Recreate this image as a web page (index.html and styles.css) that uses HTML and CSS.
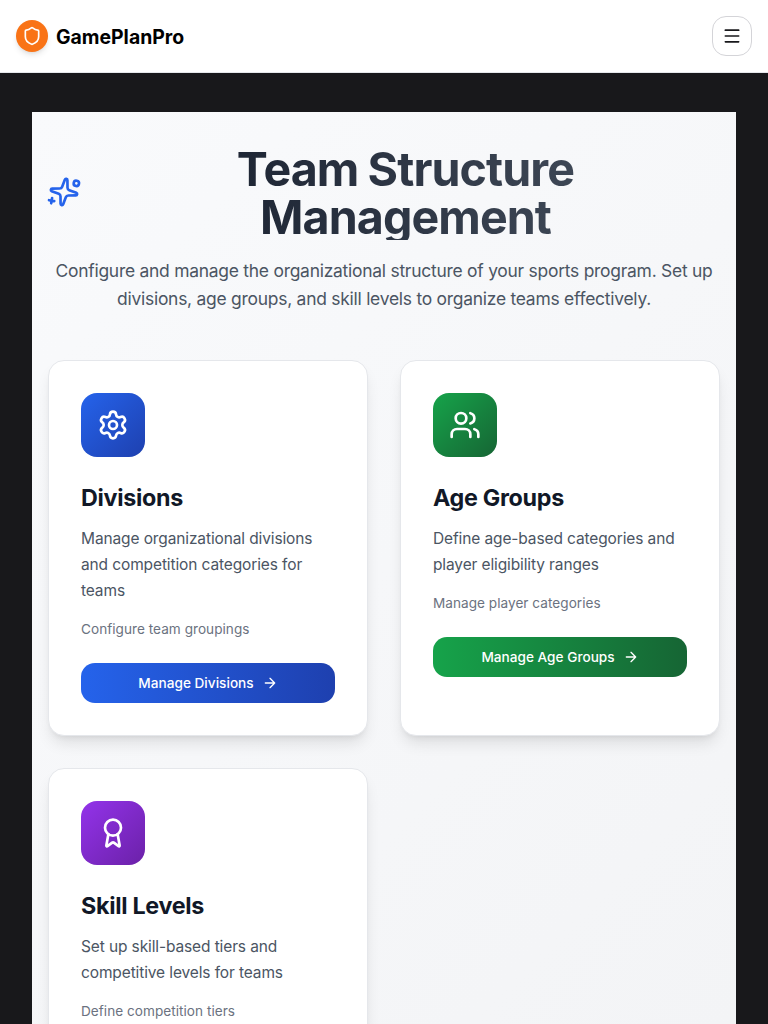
FILE: index.html
```html
<!DOCTYPE html>
<html lang="en">
<head>
<meta charset="utf-8">
<title>GamePlanPro</title>
<link rel="stylesheet" href="styles.css">
</head>
<body>
<header class="topbar">
  <div class="brand">
    <span class="brand-mark"><svg class="icon icon-20" viewBox="0 0 24 24"><path d="M20 13c0 5-3.5 7.5-7.66 8.95a1 1 0 0 1-.67-.01C7.5 20.5 4 18 4 13V6a1 1 0 0 1 1-1c2 0 4.5-1.2 6.24-2.72a1.17 1.17 0 0 1 1.52 0C14.51 3.81 17 5 19 5a1 1 0 0 1 1 1z"/></svg></span>
    <span class="brand-name">GamePlanPro</span>
  </div>
  <button class="menu-button" aria-label="Menu"><svg class="icon icon-20" viewBox="0 0 24 24"><path d="M4 5h16M4 12h16M4 19h16"/></svg></button>
</header>
<main class="page">
  <section class="panel">
    <div class="hero">
      <div class="title-row">
        <svg class="icon sparkle" viewBox="0 0 24 24"><path d="M11.017 2.814a1 1 0 0 1 1.966 0l1.051 5.558a2 2 0 0 0 1.594 1.594l5.558 1.051a1 1 0 0 1 0 1.966l-5.558 1.051a2 2 0 0 0-1.594 1.594l-1.051 5.558a1 1 0 0 1-1.966 0l-1.051-5.558a2 2 0 0 0-1.594-1.594l-5.558-1.051a1 1 0 0 1 0-1.966l5.558-1.051a2 2 0 0 0 1.594-1.594zM20 2v4M22 4h-4"/><circle cx="4" cy="20" r="2"/></svg>
        <h1 class="title">Team Structure Management</h1>
      </div>
      <p class="lead">Configure and manage the organizational structure of your sports program. Set up divisions, age groups, and skill levels to organize teams effectively.</p>
    </div>
    <div class="cards">
      <article class="card">
        <div class="tile blue"><svg class="icon icon-32" viewBox="0 0 24 24"><path d="M9.671 4.136a2.34 2.34 0 0 1 4.659 0 2.34 2.34 0 0 0 3.319 1.915 2.34 2.34 0 0 1 2.33 4.033 2.34 2.34 0 0 0 0 3.831 2.34 2.34 0 0 1-2.33 4.033 2.34 2.34 0 0 0-3.319 1.915 2.34 2.34 0 0 1-4.659 0 2.34 2.34 0 0 0-3.32-1.915 2.34 2.34 0 0 1-2.33-4.033 2.34 2.34 0 0 0 0-3.831A2.34 2.34 0 0 1 6.35 6.051a2.34 2.34 0 0 0 3.319-1.915"/><circle cx="12" cy="12" r="3"/></svg></div>
        <h2>Divisions</h2>
        <p class="desc">Manage organizational divisions and competition categories for teams</p>
        <p class="note">Configure team groupings</p>
        <button class="action blue-bar">Manage Divisions<svg class="icon icon-16" viewBox="0 0 24 24"><path d="M5 12h14M12 5l7 7-7 7"/></svg></button>
      </article>
      <article class="card">
        <div class="tile green"><svg class="icon icon-32" viewBox="0 0 24 24"><path d="M16 21v-2a4 4 0 0 0-4-4H6a4 4 0 0 0-4 4v2"/><circle cx="9" cy="7" r="4"/><path d="M22 21v-2a4 4 0 0 0-3-3.87M16 3.13a4 4 0 0 1 0 7.75"/></svg></div>
        <h2>Age Groups</h2>
        <p class="desc">Define age-based categories and player eligibility ranges</p>
        <p class="note">Manage player categories</p>
        <button class="action green-bar">Manage Age Groups<svg class="icon icon-16" viewBox="0 0 24 24"><path d="M5 12h14M12 5l7 7-7 7"/></svg></button>
      </article>
      <article class="card">
        <div class="tile purple"><svg class="icon icon-32" viewBox="0 0 24 24"><path d="m15.477 12.89 1.515 8.526a.5.5 0 0 1-.81.47l-3.58-2.687a1 1 0 0 0-1.197 0l-3.586 2.686a.5.5 0 0 1-.81-.469l1.514-8.526"/><circle cx="12" cy="8" r="6"/></svg></div>
        <h2>Skill Levels</h2>
        <p class="desc">Set up skill-based tiers and competitive levels for teams</p>
        <p class="note">Define competition tiers</p>
      </article>
    </div>
  </section>
</main>
</body>
</html>
```
FILE: styles.css
```css
* { box-sizing: border-box; margin: 0; }
html { overflow: hidden; }
body { height: 1024px; overflow: hidden; background: #18181b; font-family: Inter, sans-serif; }
.icon { fill: none; stroke: currentColor; stroke-width: 2; stroke-linecap: round; stroke-linejoin: round; flex: none; }
.icon-16 { width: 16px; height: 16px; }
.icon-20 { width: 20px; height: 20px; }
.icon-32 { width: 32px; height: 32px; }
.topbar { height: 73px; padding: 0 16px; display: flex; align-items: center; justify-content: space-between; background: #fff; border-bottom: 1px solid #e5e7eb; }
.brand { display: flex; align-items: center; gap: 8px; }
.brand-mark { width: 32px; height: 32px; border-radius: 50%; background: #f97316; color: #fff; display: grid; place-items: center; box-shadow: 0 4px 6px -1px rgba(0,0,0,.1), 0 2px 4px -2px rgba(0,0,0,.1); }
.brand-name { padding-top: 2px; font-size: 19.4px; line-height: 28px; font-weight: 700; letter-spacing: 0; color: #000; }
.menu-button { width: 40px; height: 40px; padding: 0; border: 1px solid #d4d4d8; border-radius: 14px; background: #fff; color: #18181b; display: grid; place-items: center; }
.page { padding: 39px 32px 0; }
.panel { padding: 32px 16px; height: 912px; background: linear-gradient(135deg, #f9fafc, #f3f4f6); }
.hero { text-align: center; margin-bottom: 47px; }
.title-row { display: flex; align-items: center; gap: 12px; margin-bottom: 17px; }
.sparkle { width: 32px; height: 32px; color: #2563eb; transform: rotate(190deg); overflow: visible; }
.title { flex: 1; height: 96px; padding-top: 1px; padding-right: 1px; font-size: 46.6px; line-height: 48px; font-weight: 700; letter-spacing: -.9px; word-spacing: -1px; color: transparent; background: linear-gradient(90deg, #111827, #4b5563); -webkit-background-clip: text; background-clip: text; }
.lead { font-size: 17.45px; line-height: 28px; letter-spacing: -.25px; color: #4b5563; }
.cards { display: grid; grid-template-columns: 1fr 1fr; gap: 32px; }
.card { padding: 32px; border: 1px solid #e5e7eb; border-radius: 16px; background: #fff; box-shadow: 0 10px 15px -3px rgba(0,0,0,.1), 0 4px 6px -4px rgba(0,0,0,.1); }
.tile { width: 64px; height: 64px; border-radius: 16px; display: grid; place-items: center; color: #fff; margin-bottom: 25px; }
.blue { background: linear-gradient(135deg, #2563eb, #1e40af); }
.green { background: linear-gradient(135deg, #16a34a, #166534); }
.purple { background: linear-gradient(135deg, #9333ea, #6b21a8); }
.blue-bar { background: linear-gradient(90deg, #2563eb, #1e40af); }
.green-bar { background: linear-gradient(90deg, #16a34a, #166534); }
.card h2 { font-size: 23.3px; line-height: 32px; font-weight: 700; letter-spacing: -.3px; color: #111827; margin-bottom: 12px; }
.desc { font-size: 15.5px; line-height: 26px; letter-spacing: -.12px; color: #4b5563; margin-bottom: 15px; }
.note { font-size: 13.6px; line-height: 20px; letter-spacing: .03px; color: #6b7280; margin-bottom: 24px; }
.action { width: 100%; height: 40px; border: 0; border-radius: 14px; color: #fff; font: 500 13.6px/20px Inter, sans-serif; letter-spacing: .02px; display: flex; align-items: center; justify-content: center; gap: 8px; }
```
